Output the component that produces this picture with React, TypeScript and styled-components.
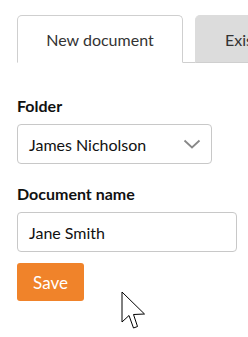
import styled, { createGlobalStyle } from "styled-components";

const GlobalStyle = createGlobalStyle`
    html, body {
        margin: 0;
        padding: 0;
        background: #fff;
    }
    body {
        font-family: Lato, "Open Sans", sans-serif;
        color: #222;
    }
`;

const Page = styled.div`
    position: relative;
    width: 248px;
    height: 337px;
    overflow: hidden;
    padding: 15px 0 0 17px;
    box-sizing: border-box;
`;

const TabList = styled.div`
    display: flex;
    gap: 12px;
    border-bottom: 1px solid #cfcfcf;
    width: 260px;
`;

const Tab = styled.div<{ $active?: boolean }>`
    flex: none;
    display: flex;
    align-items: center;
    justify-content: ${(p) => (p.$active ? "center" : "flex-start")};
    box-sizing: border-box;
    height: 48px;
    width: ${(p) => (p.$active ? "166px" : "120px")};
    padding-left: ${(p) => (p.$active ? "0" : "29px")};
    margin-bottom: -1px;
    border: 1px solid ${(p) => (p.$active ? "#cfcfcf" : "#dcdcdc")};
    border-bottom: ${(p) => (p.$active ? "1px solid #fff" : "1px solid #cfcfcf")};
    border-radius: 5px 5px 0 0;
    background: ${(p) => (p.$active ? "#fff" : "#dcdcdc")};
    font-size: 16px;
    color: #333;
    white-space: nowrap;
`;

const Form = styled.div`
    display: flex;
    flex-direction: column;
    padding-top: 33px;
`;

const Field = styled.div`
    display: flex;
    flex-direction: column;
    gap: 8px;
    margin-bottom: 20px;
`;

const Label = styled.label`
    font-size: 16px;
    font-weight: 700;
    line-height: 20px;
    color: #111;
`;

const SelectBox = styled.div`
    display: flex;
    align-items: center;
    justify-content: space-between;
    box-sizing: border-box;
    width: 195px;
    height: 40px;
    padding: 0 10px 0 11px;
    border: 1px solid #c8c8c8;
    border-radius: 4px;
    font-size: 16px;
    color: #111;
`;

const TextInput = styled.div`
    display: flex;
    align-items: center;
    box-sizing: border-box;
    width: 220px;
    height: 40px;
    padding: 0 11px;
    border: 1px solid #c8c8c8;
    border-radius: 4px;
    font-size: 16px;
    color: #111;
`;

const SaveButton = styled.button`
    width: 67px;
    height: 38px;
    margin-top: -9px;
    border: none;
    border-radius: 3px;
    background: #f0832a;
    color: #fff;
    font-family: Lato, sans-serif;
    font-size: 17px;
    padding: 0;
`;

const Pointer = styled.svg`
    position: absolute;
    left: 121px;
    top: 291px;
`;

export default function App() {
    return (
        <Page>
            <GlobalStyle />
            <TabList>
                <Tab $active>New document</Tab>
                <Tab>Existing document</Tab>
            </TabList>
            <Form>
                <Field>
                    <Label>Folder</Label>
                    <SelectBox>
                        <span>James Nicholson</span>
                        <svg width="18" height="10" viewBox="0 0 18 10">
                            <path d="M1.5 1.5 L9 8.5 L16.5 1.5" fill="none" stroke="#888" strokeWidth="1.8" />
                        </svg>
                    </SelectBox>
                </Field>
                <Field>
                    <Label>Document name</Label>
                    <TextInput>Jane Smith</TextInput>
                </Field>
                <div>
                    <SaveButton>Save</SaveButton>
                </div>
            </Form>
            <Pointer width="26" height="40" viewBox="0 0 26 40">
                <path
                    d="M1 1 L1 31 L8 24.5 L12.5 37 L16.5 35.5 L12.5 23.5 L23.5 23 Z"
                    fill="#fff"
                    stroke="#000"
                    strokeWidth="1"
                    strokeLinejoin="miter"
                />
            </Pointer>
        </Page>
    );
}
